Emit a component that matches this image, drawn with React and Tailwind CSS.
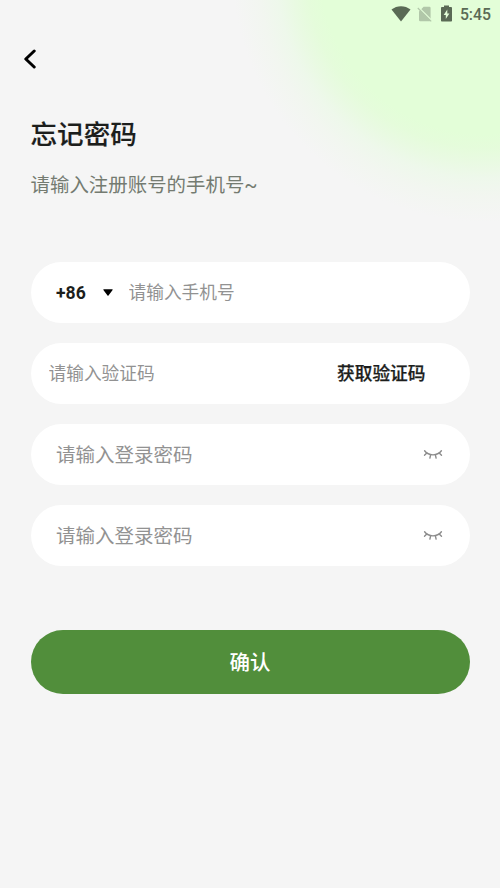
import { useState } from 'react'

function StatusBar() {
  return (
    <div className="flex h-7 items-center justify-end pr-[9px] text-[#5a6a55]">
      <svg className="mb-[2px]" width="20" height="17" viewBox="0 0 20 17" fill="currentColor">
        <path d="M0.5 4.6C6 0 14 0 19.5 4.6L10 16.4Z" />
      </svg>
      <svg className="mb-[1px] ml-[6px]" width="16" height="16" viewBox="0 0 16 16">
        <path d="M6.6 0.8h5.8a1.2 1.2 0 0 1 1.2 1.2v12.2a1 1 0 0 1-1 1H3.2a1.2 1.2 0 0 1-1.2-1.2V5.4Z" fill="#b1c7a9" />
        <path d="M1.4 1.2L15 14.8" stroke="#e3fed8" strokeWidth="1.5" />
        <path d="M0.8 2L14.2 15.4" stroke="#b1c7a9" strokeWidth="1.2" />
      </svg>
      <svg className="mb-[2px] ml-[8px]" width="11" height="17" viewBox="0 0 11 17">
        <path d="M3 0.4h5v1.7h2.2a.8.8 0 0 1 .8.8v12.9a.8.8 0 0 1-.8.8H.8a.8.8 0 0 1-.8-.8V2.9a.8.8 0 0 1 .8-.8H3Z" fill="currentColor" />
        <path d="M6.3 4.6L2.7 10h2.1v4.1l3.6-5.6H6.3Z" fill="#e3fed8" />
      </svg>
      <span className="ml-[8px] pt-[1px] text-[15.8px] leading-none font-medium">5:45</span>
    </div>
  )
}

function ClosedEye() {
  return (
    <svg width="20" height="12" viewBox="0 0 20 12" fill="none" stroke="#8c8c8c" strokeWidth="1.4" strokeLinecap="round">
      <path d="M1.6 1.8C5.8 7.2 14.2 7.2 18.4 1.8" />
      <path d="M3.8 3.9L1.5 6.2M7.6 5.8L6.9 9.1M12.4 5.8L13.1 9.1M16.2 3.9L18.5 6.2" />
    </svg>
  )
}

function PasswordField() {
  const [visible, setVisible] = useState(false)

  return (
    <div className="flex h-[61.5px] items-center rounded-full bg-white pt-[2px] pr-[27px] pl-[25.5px]">
      <input
        type={visible ? 'text' : 'password'}
        placeholder="请输入登录密码"
        className="min-w-0 flex-1 text-[19.5px] outline-none placeholder:text-[#929292]"
      />
      <button type="button" onClick={() => setVisible(v => !v)}>
        <ClosedEye />
      </button>
    </div>
  )
}

export default function App() {
  return (
    <div className="min-h-screen bg-[#f5f5f5] bg-[radial-gradient(circle_at_484px_-30px,#e3fed8_164px,#e5fcdb_178px,#e9fae2_192px,#eef8eb_208px,#f2f6f0_226px,#f5f5f5_252px)] font-['Roboto','Noto_Sans_CJK_SC',sans-serif] text-[#1c1e1c]">
      <StatusBar />

      {/* Back */}
      <div className="flex h-[61px] items-center pl-[23px]">
        <button type="button">
          <svg width="14" height="20" viewBox="0 0 14 20" fill="none" stroke="#000" strokeWidth="3" strokeLinecap="round" strokeLinejoin="round">
            <path d="M11.2 2L2.8 10L11.2 18" />
          </svg>
        </button>
      </div>

      <div className="px-[30.5px]">
        <h1 className="mt-[26px] text-[26.6px] leading-[40px] font-medium [-webkit-text-stroke:0.15px]">忘记密码</h1>
        <p className="mt-[16px] text-[19.45px] leading-[30px] text-[#747b71]">请输入注册账号的手机号~</p>

        {/* Form */}
        <div className="mt-[60.5px] flex flex-col gap-[19.5px]">
          <div className="flex h-[61.5px] items-center rounded-full bg-white px-[25.5px] pt-[2px]">
            <span className="w-[46.5px] text-[17.6px] font-bold">+86</span>
            <svg className="mb-[2px]" width="10" height="7" viewBox="0 0 10 7">
              <path d="M0.8 0.3h8.4a.5.5 0 0 1 .4.8L5.5 6.4a.7.7 0 0 1-1 0L.4 1.1A.5.5 0 0 1 .8.3Z" />
            </svg>
            <input
              type="tel"
              placeholder="请输入手机号"
              className="ml-[16px] min-w-0 flex-1 text-[17.7px] outline-none placeholder:text-[#929292]"
            />
          </div>

          <div className="flex h-[61.5px] items-center rounded-full bg-white pt-[2px] pr-[44px] pl-[18px]">
            <input
              type="text"
              placeholder="请输入验证码"
              className="min-w-0 flex-1 text-[17.7px] outline-none placeholder:text-[#929292]"
            />
            <button type="button" className="pt-[1px] text-[17.7px] font-medium [-webkit-text-stroke:0.25px]">获取验证码</button>
          </div>

          <PasswordField />
          <PasswordField />
        </div>

        <button type="button" className="mt-[64px] h-[64px] w-full rounded-full bg-[#518e3b] pt-[2px] text-[20.5px] font-medium text-white">
          确认
        </button>
      </div>
    </div>
  )
}
